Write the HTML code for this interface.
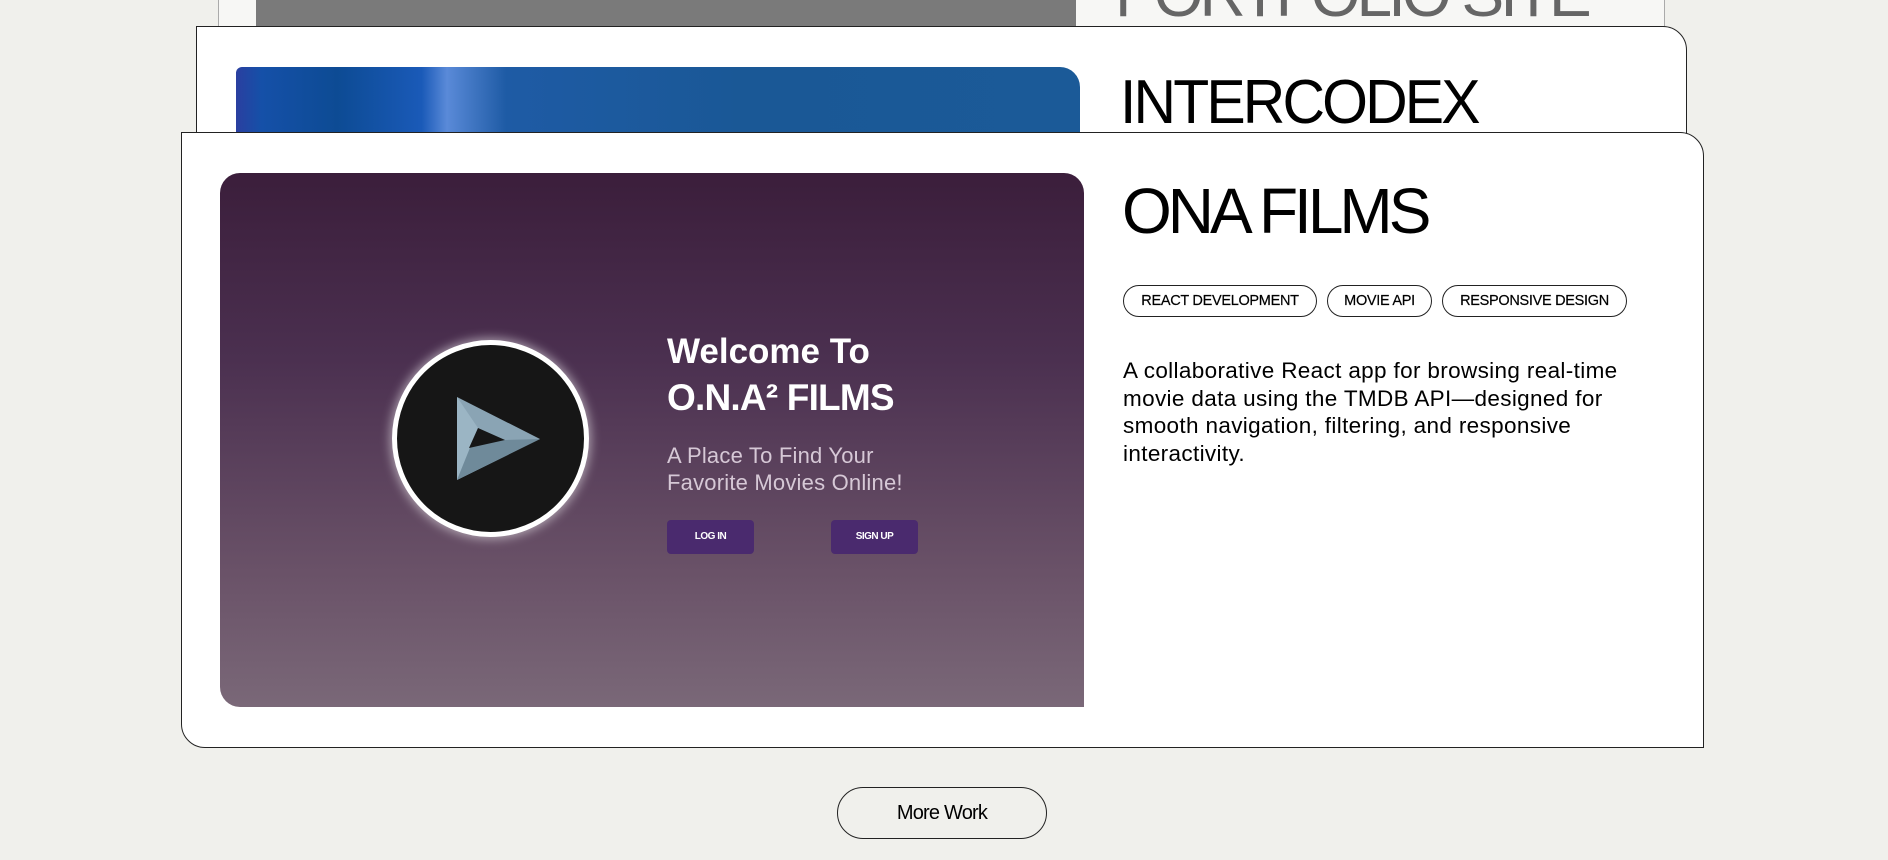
<!DOCTYPE html>
<html><head><meta charset="utf-8"><style>
*{margin:0;padding:0;box-sizing:border-box}
body{width:1888px;height:860px;background:#f0f0ec;position:relative;overflow:hidden;font-family:"Liberation Sans",sans-serif;color:#000}
.abs{position:absolute}
.card{position:absolute;background:#fff;border:1px solid #222}
.title{position:absolute;font-size:64px;letter-spacing:-4px;line-height:1;white-space:nowrap}
.tag{position:absolute;top:285px;height:32px;border:1px solid #222;border-radius:16px;font-size:14.5px;line-height:30px;text-align:center;letter-spacing:-0.3px;-webkit-text-stroke:0.2px #000}
.btn{position:absolute;top:520px;width:87px;height:34px;background:#4a2a6e;border-radius:4px;color:#fff;font-size:10px;font-weight:bold;text-align:center;line-height:34px;letter-spacing:-0.5px}
</style></head><body>
<div class="card" style="left:218px;top:-30px;width:1447px;height:57px;background:#f7f7f5;border-color:#aaa"></div>
<div class="abs" style="left:256px;top:0;width:820px;height:26px;background:#7a7a7a"></div>
<div class="title" style="left:1115px;top:-38px;color:#666">PORTFOLIO SITE</div>
<div class="card" style="left:196px;top:26px;width:1491px;height:200px;border-radius:0 24px 0 0"></div>
<div class="abs" style="left:236px;top:67px;width:844px;height:80px;border-radius:6px 20px 0 0;background:linear-gradient(90deg,#2a3fa0 0%,#1550a8 3%,#0d4b94 12%,#1a5ab8 22%,#5a8ad8 25%,#1e5ba5 32%,#1a5896 60%,#1b5a98 100%)"></div>
<div class="title" style="left:1120px;top:72px;font-size:62px;letter-spacing:-3px;transform:scaleX(0.95);transform-origin:left">INTERCODEX</div>
<div class="card" style="left:181px;top:132px;width:1523px;height:616px;border-radius:0 24px 0 24px"></div>
<div class="abs" style="left:220px;top:173px;width:864px;height:534px;border-radius:20px 20px 0 20px;background:linear-gradient(180deg,#3b1e3b 0%,#4b3050 35%,#6a5268 75%,#7a6878 100%)"></div>
<div class="abs" style="left:392px;top:340px;width:197px;height:197px;border-radius:50%;background:#161616;border:5px solid #fff;box-shadow:0 0 10px 2px rgba(255,255,255,0.5)"></div>
<svg class="abs" style="left:450px;top:395px" width="100" height="90" viewBox="0 0 100 90">
<polygon points="7,2 90,44 7,85" fill="#8aa4b4"/>
<polygon points="7,2 28,33 7,85" fill="#9bb5c4"/>
<polygon points="7,85 28,33 55,45 90,44" fill="#6f8a9a"/>
<polygon points="28,33 55,45 19,53" fill="#161616"/>
</svg>
<div class="abs" style="left:667px;top:331px;color:#fff;font-weight:bold;font-size:35px;letter-spacing:0px;line-height:1.2">Welcome To</div>
<div class="abs" style="left:667px;top:376px;color:#fff;font-weight:bold;font-size:37px;letter-spacing:-0.8px;line-height:1.2">O.N.A² FILMS</div>
<div class="abs" style="left:667px;top:442px;color:#d6c8d6;font-size:22px;letter-spacing:0.2px;line-height:27px">A Place To Find Your<br>Favorite Movies Online!</div>
<div class="btn" style="left:667px">LOG IN</div>
<div class="btn" style="left:831px">SIGN UP</div>
<div class="title" style="left:1122px;top:179px">ONA FILMS</div>
<div class="tag" style="left:1123px;width:194px">REACT DEVELOPMENT</div>
<div class="tag" style="left:1327px;width:105px">MOVIE API</div>
<div class="tag" style="left:1442px;width:185px">RESPONSIVE DESIGN</div>
<div class="abs" style="left:1123px;top:357px;width:540px;font-size:22.5px;line-height:27.7px;letter-spacing:0.35px">A collaborative React app for browsing real-time movie data using the TMDB API—designed for smooth navigation, filtering, and responsive interactivity.</div>
<div class="abs" style="left:837px;top:787px;width:210px;height:52px;border:1px solid #222;border-radius:26px;text-align:center;line-height:50px;font-size:20px;letter-spacing:-0.8px">More Work</div>
</body></html>
